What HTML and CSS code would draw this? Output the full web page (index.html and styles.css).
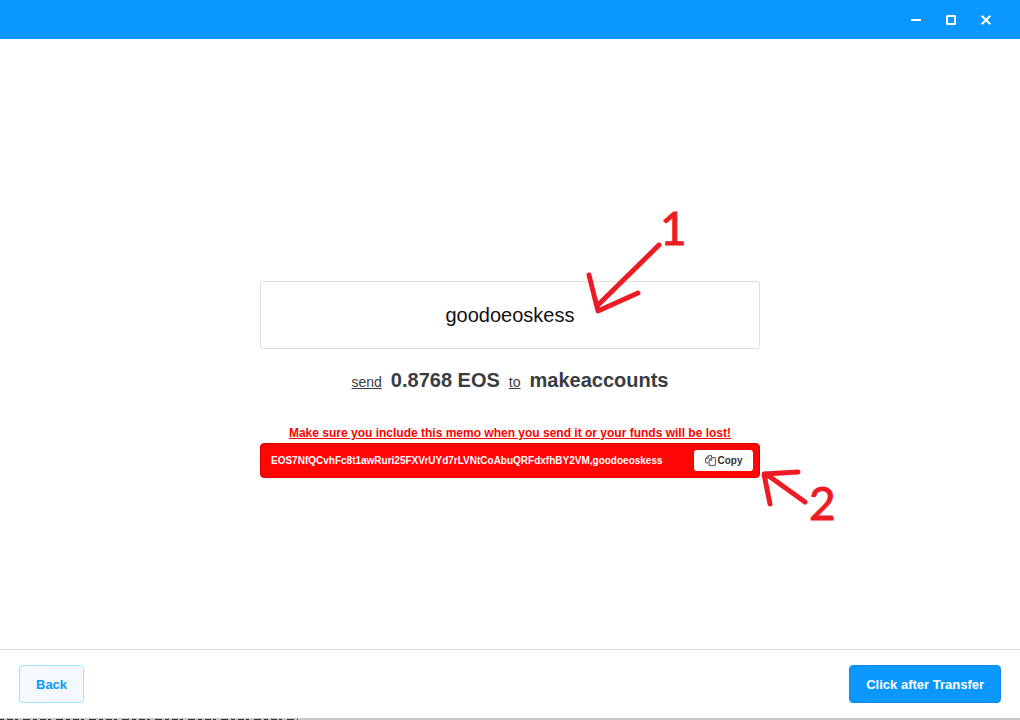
FILE: index.html
```html
<!DOCTYPE html>
<html lang="en">
<head>
<meta charset="utf-8">
<title>Account transfer</title>
<link rel="stylesheet" href="styles.css">
</head>
<body>
<div class="window">
  <header class="titlebar">
    <button class="window-control" type="button" aria-label="Minimize"><svg width="12" height="12" viewBox="0 0 12 12"><path d="M1 6h10" /></svg></button>
    <button class="window-control" type="button" aria-label="Maximize"><svg width="12" height="12" viewBox="0 0 12 12"><rect x="2" y="2" width="8" height="8" rx="0.5" /></svg></button>
    <button class="window-control" type="button" aria-label="Close"><svg width="12" height="12" viewBox="0 0 12 12"><path d="M1.7 1.7l8.6 8.6M10.3 1.7l-8.6 8.6" /></svg></button>
  </header>
  <main class="content">
    <section class="transfer">
      <input class="account" type="text" value="goodoeoskess" aria-label="Account name">
      <p class="instruction"><u>send</u><strong>0.8768 EOS</strong><u>to</u><strong>makeaccounts</strong></p>
      <p class="warning">Make sure you include this memo when you send it or your funds will be lost!</p>
      <div class="memo">
        <span class="memo-text">EOS7NfQCvhFc8t1awRuri25FXVrUYd7rLVNtCoAbuQRFdxfhBY2VM,goodoeoskess</span>
        <button class="copy" type="button"><svg width="11" height="11" viewBox="0 0 11 11"><path d="M3.5 7.8H.6V3.3L3.3.6h3.2v2M.6 3.3h2.7V.6M4.1 10.4V5.3l2.7-2.7h3.6v7.8zM4.1 5.3h2.7V2.6" /></svg>Copy</button>
      </div>
      <svg class="annotations" width="580" height="320" viewBox="0 0 580 320">
        <path d="M399 44L337 105M329 74L338 110L378 92" />
        <path d="M545 301L506 273M538 271L504 273L510 303" />
        <text x="400" y="44">1</text>
        <text x="549" y="319">2</text>
      </svg>
    </section>
  </main>
  <footer class="actions">
    <button class="button back" type="button">Back</button>
    <button class="button next" type="button">Click after Transfer</button>
  </footer>
  <svg class="page-edge" viewBox="0 0 300 2" preserveAspectRatio="xMinYMid meet" aria-hidden="true"><path d="M0 1.5h298" /></svg>
</div>
</body>
</html>
```
FILE: styles.css
```css
* { box-sizing: border-box; }

body {
  margin: 0;
  background: #fff;
  color: #393d42;
  font-family: "Liberation Sans", Arial, sans-serif;
}

button, input { font-family: inherit; }

.window {
  display: flex;
  flex-direction: column;
  min-height: 100vh;
}

.titlebar {
  display: flex;
  justify-content: flex-end;
  align-items: center;
  gap: 23px;
  height: 39px;
  padding: 0 28px;
  background: #0a98ff;
}

.window-control {
  display: flex;
  padding: 0;
  border: 0;
  background: none;
}

.window-control svg {
  fill: none;
  stroke: #fff;
  stroke-width: 2;
}

.content {
  display: flex;
  flex: 1;
  justify-content: center;
  align-items: center;
  padding: 71px 20px 0;
}

.transfer {
  position: relative;
  width: 500px;
}

.account {
  display: block;
  width: 100%;
  height: 68px;
  border: 1px solid #dedede;
  border-radius: 3px;
  background: #fff;
  color: #111;
  font-size: 20px;
  text-align: center;
}

.instruction {
  display: flex;
  justify-content: center;
  align-items: baseline;
  gap: 9px;
  margin: 19px 0 0;
  font-size: 14px;
  line-height: 24px;
}

.instruction strong { font-size: 20px; }

.warning {
  margin: 30px 0 0;
  color: #f00;
  font-size: 12px;
  font-weight: bold;
  line-height: 19px;
  text-align: center;
  text-decoration: underline;
  white-space: nowrap;
}

.memo {
  display: flex;
  justify-content: space-between;
  align-items: center;
  height: 35px;
  padding: 0 6px 0 10px;
  border: 1px solid #e00000;
  border-radius: 4px;
  background: #ff0505;
  color: #fff;
}

.memo-text {
  font-size: 10px;
  font-weight: bold;
}

.copy {
  display: flex;
  justify-content: center;
  align-items: center;
  gap: 2px;
  width: 59px;
  height: 21px;
  padding: 0;
  border: 0;
  border-radius: 3px;
  background: #fff;
  color: #333;
  font-size: 10px;
  font-weight: bold;
}

.copy svg {
  fill: none;
  stroke: #555;
}

.annotations {
  position: absolute;
  top: -80px;
  left: 0;
  overflow: visible;
  pointer-events: none;
}

.annotations path {
  fill: none;
  stroke: #ed1c24;
  stroke-width: 5;
  stroke-linecap: round;
  stroke-linejoin: round;
}

.annotations text {
  fill: #ed1c24;
  stroke: #ed1c24;
  font-family: Lato, sans-serif;
  font-size: 46px;
}

.actions {
  display: flex;
  justify-content: space-between;
  align-items: center;
  height: 69px;
  padding: 0 19px;
  border-top: 1px solid #dedede;
}

.button {
  height: 38px;
  padding: 0 16px;
  border: 1px solid #078bef;
  border-radius: 4px;
  font-size: 13px;
  font-weight: bold;
}

.back {
  border-color: #a9e0ff;
  background: #f3f9ff;
  color: #0a98ff;
}

.next {
  background: #0a98ff;
  color: #fff;
}

.page-edge {
  display: block;
  width: 100%;
  height: 2px;
  background: #c8c8c8;
}

.page-edge path {
  stroke: #333;
  stroke-dasharray: 4 3 6 2 3 5 7 3;
}
```
